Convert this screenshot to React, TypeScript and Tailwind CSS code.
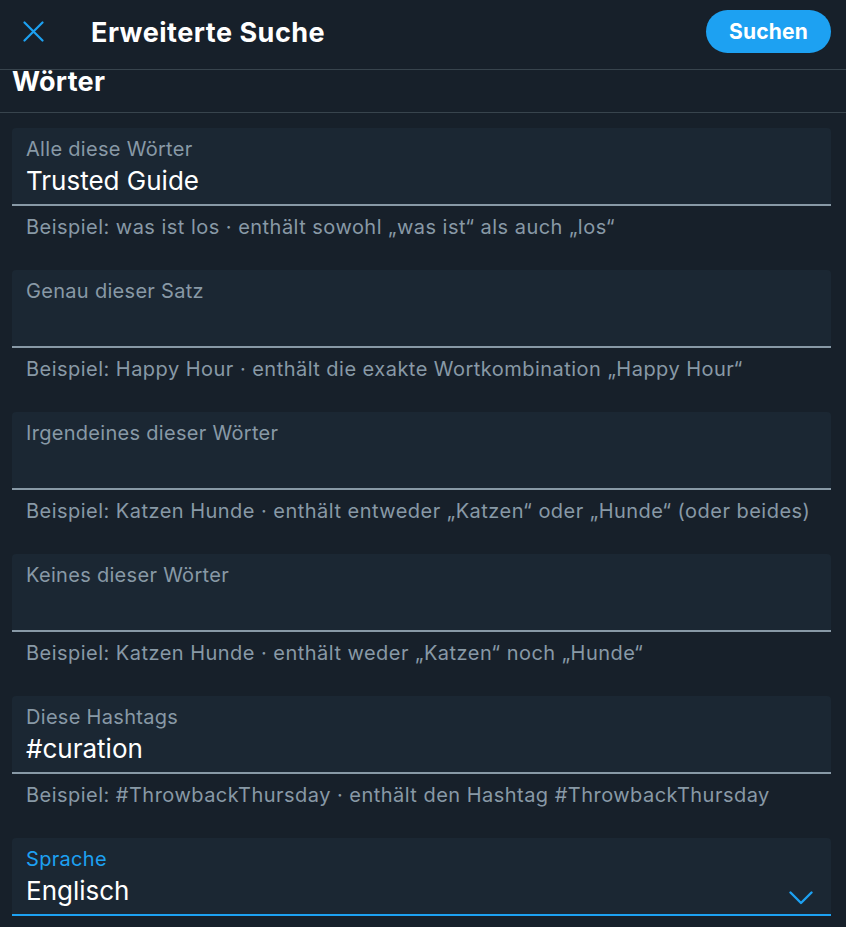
export default function App() {
  const fields = [
    {
      label: "Alle diese Wörter",
      value: "Trusted Guide",
      help: "Beispiel: was ist los · enthält sowohl „was ist“ als auch „los“",
    },
    {
      label: "Genau dieser Satz",
      value: "",
      help: "Beispiel: Happy Hour · enthält die exakte Wortkombination „Happy Hour“",
    },
    {
      label: "Irgendeines dieser Wörter",
      value: "",
      help: "Beispiel: Katzen Hunde · enthält entweder „Katzen“ oder „Hunde“ (oder beides)",
    },
    {
      label: "Keines dieser Wörter",
      value: "",
      help: "Beispiel: Katzen Hunde · enthält weder „Katzen“ noch „Hunde“",
    },
    {
      label: "Diese Hashtags",
      value: "#curation",
      help: "Beispiel: #ThrowbackThursday · enthält den Hashtag #ThrowbackThursday",
    },
  ]

  return (
    <div className="w-[846px] h-[927px] overflow-hidden bg-[#17202a] text-white font-['Inter','Liberation_Sans',sans-serif]">
      {/* Header */}
      <header className="h-[70px] flex items-center border-b border-[#38444d] pl-[23px] pr-[15px] pb-[6px]">
        <svg width="21" height="21" viewBox="0 0 21 21" className="text-[#1da1f2] shrink-0">
          <path d="M1.5 1.5 L19.5 19.5 M19.5 1.5 L1.5 19.5" stroke="currentColor" strokeWidth="2.2" strokeLinecap="round" />
        </svg>
        <h1 className="ml-[47px] mt-[3px] text-[27px] font-bold tracking-[0.5px]">Erweiterte Suche</h1>
        <button className="ml-auto h-[43px] w-[125px] rounded-full bg-[#1da1f2] text-[21px] font-bold tracking-[0.2px]">
          Suchen
        </button>
      </header>

      {/* Section heading */}
      <div className="h-[44px] border-b border-[#38444d] pl-3 -mt-[1px]">
        <h2 className="text-[27px] font-bold leading-[24px] pt-[1px] tracking-[0.3px]">Wörter</h2>
      </div>

      <div className="pl-3 pr-[15px] pt-[15px]">
        {fields.map((f) => (
          <div key={f.label}>
            <div className="h-[78px] rounded-t-[4px] bg-[#1b2733] border-b-2 border-[#8899a6] px-[14px] pt-[9px]">
              <div className="text-[20px] leading-[24px] tracking-[0.3px] text-[#8899a6]">{f.label}</div>
              <div className="text-[26px] leading-[40px] text-white">{f.value}</div>
            </div>
            <div className="h-[64px] px-[14px] pt-[9px] text-[20px] leading-[24px] tracking-[0.47px] text-[#8899a6]">{f.help}</div>
          </div>
        ))}

        <div className="h-[78px] rounded-t-[4px] bg-[#1b2733] border-b-2 border-[#1da1f2] pl-[14px] pr-[18px] pt-[9px] flex items-start">
          <div className="flex-1">
            <div className="text-[20px] leading-[24px] tracking-[0.3px] text-[#1da1f2]">Sprache</div>
            <div className="text-[26px] leading-[40px] text-white">Englisch</div>
          </div>
          <svg width="24" height="14" viewBox="0 0 24 14" className="mt-[44px] text-[#1da1f2]">
            <path d="M1.5 1.5 L12 12 L22.5 1.5" stroke="currentColor" strokeWidth="2.4" fill="none" strokeLinecap="round" strokeLinejoin="round" />
          </svg>
        </div>
      </div>
    </div>
  )
}
